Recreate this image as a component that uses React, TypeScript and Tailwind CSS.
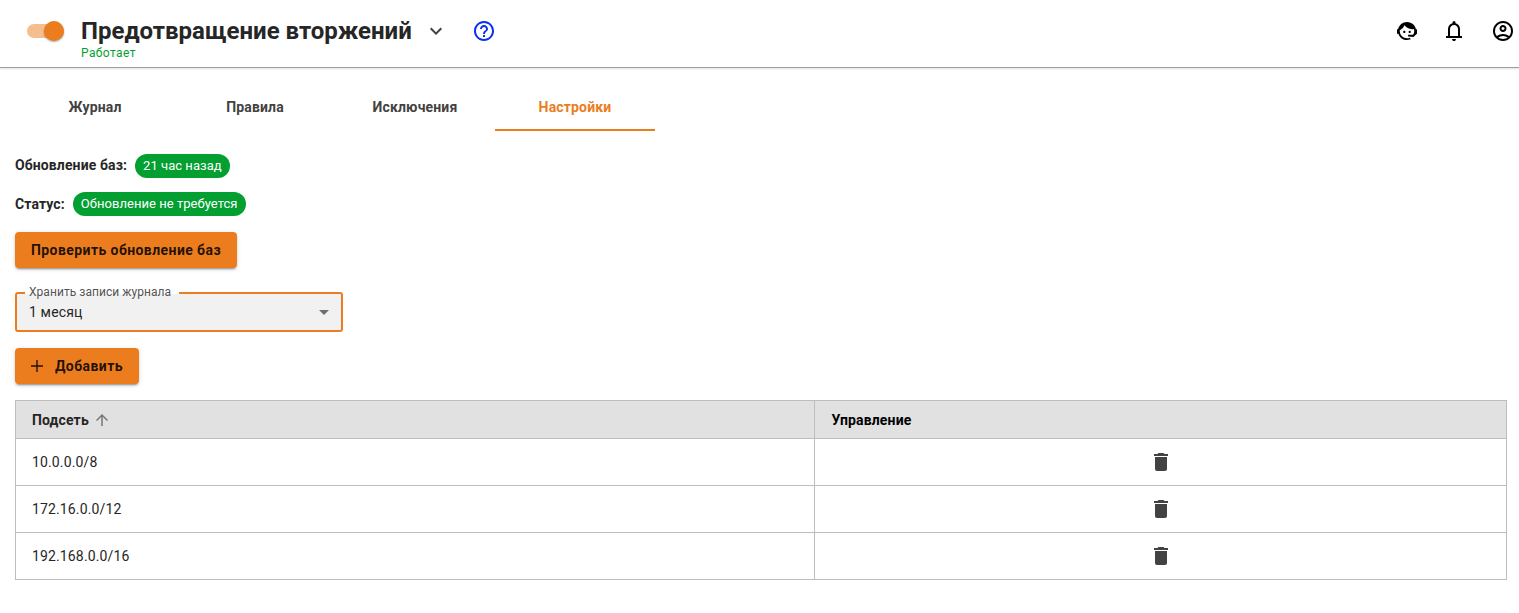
import type { ReactNode } from "react";

const icons = {
  chevron: "M16.59 8.59L12 13.17 7.41 8.59 6 10l6 6 6-6z",
  help: "M11 18h2v-2h-2v2zm1-16C6.48 2 2 6.48 2 12s4.48 10 10 10 10-4.48 10-10S17.52 2 12 2zm0 18c-4.41 0-8-3.59-8-8s3.59-8 8-8 8 3.59 8 8-3.59 8-8 8zm0-14c-2.21 0-4 1.79-4 4h2c0-1.1.9-2 2-2s2 .9 2 2c0 2-3 1.75-3 5h2c0-2.25 3-2.5 3-5 0-2.21-1.79-4-4-4z",
  agent:
    "M18.72,14.76C19.07,13.91 19.26,13 19.26,12C19.26,11.28 19.15,10.59 18.96,9.95C18.31,10.1 17.63,10.18 16.92,10.18C13.86,10.18 11.15,8.67 9.5,6.34C8.61,8.5 6.91,10.26 4.77,11.22C4.73,11.47 4.73,11.74 4.73,12A7.27,7.27 0 0,0 12,19.27C13.05,19.27 14.06,19.04 14.97,18.63C15.54,19.72 15.8,20.26 15.78,20.26C14.14,20.81 12.87,21.08 12,21.08C9.58,21.08 7.27,20.13 5.57,18.42C4.53,17.38 3.76,16.11 3.33,14.73H2V10.18H3.09C3.93,6.04 7.6,2.92 12,2.92C14.4,2.92 16.71,3.87 18.42,5.58C19.69,6.84 20.54,8.45 20.89,10.18H22V14.73H21.94L18.38,18L13.08,17.4V15.73H17.91L18.72,14.76M9.27,11.77C9.57,11.77 9.86,11.89 10.07,12.11C10.28,12.32 10.4,12.61 10.4,12.91C10.4,13.21 10.28,13.5 10.07,13.71C9.86,13.92 9.57,14.04 9.27,14.04C8.64,14.04 8.13,13.54 8.13,12.91C8.13,12.28 8.64,11.77 9.27,11.77M14.72,11.77C15.35,11.77 15.85,12.28 15.85,12.91C15.85,13.54 15.35,14.04 14.72,14.04C14.09,14.04 13.58,13.54 13.58,12.91A1.14,1.14 0 0,1 14.72,11.77Z",
  bell: "M4 19v-2h2v-7q0-2.075 1.25-3.687T10.5 4.2v-.7q0-.625.438-1.062T12 2t1.063.438T13.5 3.5v.7q2 .5 3.25 2.113T18 10v7h2v2zm8 3q-.825 0-1.412-.587T10 20h4q0 .825-.587 1.413T12 22m-4-5h8v-7q0-1.65-1.175-2.825T12 6T9.175 7.175T8 10z",
  account:
    "M5.85 17.1q1.275-.975 2.85-1.537T12 15t3.3.563t2.85 1.537q.875-1.025 1.363-2.325T20 12q0-3.325-2.337-5.663T12 4T6.337 6.338T4 12q0 1.475.488 2.775T5.85 17.1M12 13q-1.475 0-2.488-1.012T8.5 9.5t1.013-2.488T12 6t2.488 1.013T15.5 9.5t-1.012 2.488T12 13m0 9q-2.075 0-3.9-.788t-3.175-2.137T2.788 15.9T2 12t.788-3.9t2.137-3.175T8.1 2.788T12 2t3.9.788t3.175 2.137T21.213 8.1T22 12t-.788 3.9t-2.137 3.175t-3.175 2.138T12 22m0-2q1.325 0 2.5-.387t2.15-1.113q-.975-.725-2.15-1.112T12 17t-2.5.388T7.35 18.5q.975.725 2.15 1.113T12 20m0-9q.65 0 1.075-.425T13.5 9.5t-.425-1.075T12 8t-1.075.425T10.5 9.5t.425 1.075T12 11",
  trash: "M6 19c0 1.1.9 2 2 2h8c1.1 0 2-.9 2-2V7H6v12zM19 4h-3.5l-1-1h-5l-1 1H5v2h14V4z",
  plus: "M19.2 12.8h-6.4v6.4h-1.6v-6.4H4.8v-1.6h6.4V4.8h1.6v6.4h6.4z",
  arrowUp: "M4 12l1.41 1.41L11 7.83V20h2V7.83l5.58 5.59L20 12l-8-8-8 8z",
};

function Icon({ name, className }: { name: keyof typeof icons; className: string }) {
  return (
    <svg viewBox="0 0 24 24" fill="currentColor" className={className}>
      <path d={icons[name]} />
    </svg>
  );
}

function Badge({ children }: { children: ReactNode }) {
  return (
    <span className="flex h-6 items-center rounded-full bg-[#039f31] px-2 text-[13px] tracking-[0.04px] text-white">
      {children}
    </span>
  );
}

const buttonClass =
  "flex h-9 items-center rounded bg-[#eb7d1e] px-4 text-sm font-bold tracking-[0.42px] text-black/87 shadow-[0_3px_1px_-2px_rgba(0,0,0,0.2),0_2px_2px_0_rgba(0,0,0,0.14),0_1px_5px_0_rgba(0,0,0,0.12)]";

const tabs = ["Журнал", "Правила", "Исключения", "Настройки"];
const subnets = ["10.0.0.0/8", "172.16.0.0/12", "192.168.0.0/16"];

export default function App() {
  return (
    <div className="h-[613px] w-full overflow-hidden bg-white font-['Roboto',sans-serif] text-sm text-[#262626]">
      <header className="flex h-[68px] items-start border-b border-[#9e9e9e] pl-[27px] shadow-[0_1px_2px_rgba(0,0,0,0.12)]">
        <button className="mt-[21px] flex h-5 w-[37px] items-center justify-end">
          <span className="flex h-[14px] w-[37px] items-center justify-end rounded-full bg-[#f5be8e]">
            <span className="size-5 shrink-0 rounded-full bg-[#eb7d1e] shadow-[0_1px_2px_rgba(0,0,0,0.35)]" />
          </span>
        </button>
        <div className="ml-[17px] mt-[15px]">
          <h1 className="whitespace-nowrap text-2xl font-bold leading-8">Предотвращение вторжений</h1>
          <p className="-mt-0.5 text-xs leading-4 tracking-[0.4px] text-[#039f31]">Работает</p>
        </div>
        <Icon name="chevron" className="ml-3 mt-[19px] size-6 text-[#424242]" />
        <Icon name="help" className="ml-6 mt-[19px] size-6 text-[#0a2ff5]" />
        <div className="ml-auto mr-1 mt-[19px] flex text-black">
          <Icon name="agent" className="size-6" />
          <Icon name="bell" className="ml-[23.4px] size-6" />
          <Icon name="account" className="ml-[24.6px] size-6" />
        </div>
      </header>

      <main className="pl-[15px] pr-3">
        <nav className="flex h-[63px]">
          {tabs.map((tab) => (
            <button
              key={tab}
              className={
                tab === "Настройки"
                  ? "w-40 border-b-2 border-[#eb7d1e] pt-4 font-bold leading-6 tracking-[0.16px] text-[#eb7d1e]"
                  : "w-40 border-b-2 border-transparent pt-4 font-bold leading-6 tracking-[0.16px] text-[#424242]"
              }
            >
              {tab}
            </button>
          ))}
        </nav>

        <div className="mt-[23px] flex h-6 items-center gap-2">
          <b className="pb-0.5 font-bold tracking-[0.12px]">Обновление баз:</b>
          <Badge>21 час назад</Badge>
        </div>
        <div className="mt-[14px] flex h-6 items-center gap-2">
          <b className="font-bold tracking-[0.12px]">Статус:</b>
          <Badge>Обновление не требуется</Badge>
        </div>

        <div className="mt-4 flex">
          <button className={buttonClass}>Проверить обновление баз</button>
        </div>

        <div className="relative mt-6 flex h-10 w-[328px] items-center justify-between rounded-[3px] border-2 border-[#eb7d1e] bg-[#f1f1f1] px-3">
          <span className="tracking-[0.14px]">1 месяц</span>
          <svg viewBox="0 0 10 5" className="h-[5px] w-[10px] fill-[#6f6f6f]">
            <path d="M0 0h10L5 5z" />
          </svg>
          <span className="absolute -top-0.5 left-2 h-0.5 w-[154px] bg-white" />
          <span className="absolute -top-2.5 left-3 whitespace-nowrap text-xs leading-4 tracking-[0.05px] text-[#555]">
            Хранить записи журнала
          </span>
        </div>

        <div className="mt-4 flex">
          <button className={buttonClass}>
            <Icon name="plus" className="-ml-1 mr-2 size-5" />
            Добавить
          </button>
        </div>

        <table className="mt-4 w-full table-fixed border-collapse text-left">
          <thead>
            <tr className="h-[38px] bg-[#e1e1e1]">
              <th className="w-[799px] border border-[#bdbdbd] px-4 py-0 font-bold tracking-[0.14px]">
                <span className="flex items-center gap-1">
                  Подсеть
                  <Icon name="arrowUp" className="size-[18px] text-[#757575]" />
                </span>
              </th>
              <th className="border border-[#bdbdbd] py-0 pl-[16.5px] pr-4 font-bold tracking-[0.16px] text-black">
                Управление
              </th>
            </tr>
          </thead>
          <tbody>
            {subnets.map((subnet) => (
              <tr key={subnet} className="h-[47px]">
                <td className="border border-[#bdbdbd] px-4 py-0 tracking-[0.14px]">{subnet}</td>
                <td className="border border-[#bdbdbd] px-4 py-0">
                  <Icon name="trash" className="mx-auto size-6 text-[#424242]" />
                </td>
              </tr>
            ))}
          </tbody>
        </table>
      </main>
    </div>
  );
}
